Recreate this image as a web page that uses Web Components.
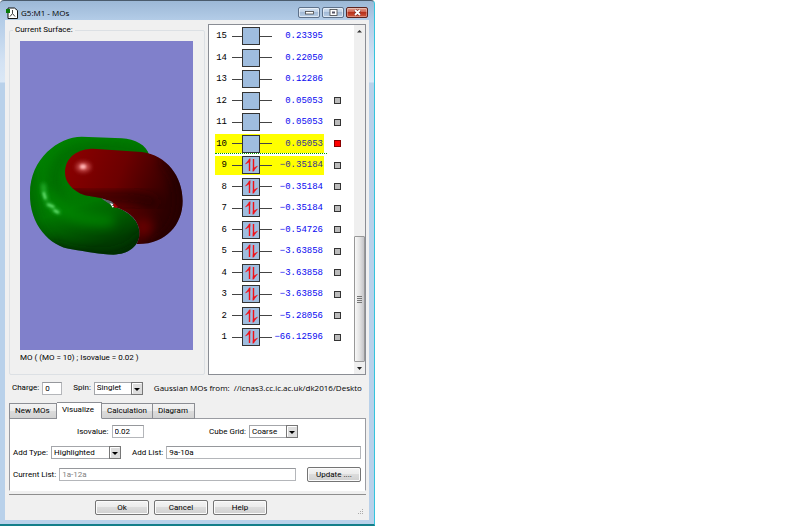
<!DOCTYPE html>
<html lang="en">
<head>
<meta charset="utf-8">
<title>G5:M1 - MOs</title>
<style>
  body { margin: 0; background: #fff; }
  :root {
    --ui: Roboto, "Liberation Sans", sans-serif;
    --title: "Open Sans", sans-serif;
    --mono: "Liberation Mono", monospace;
    font: 8px/12px var(--ui);
    color: #000;
  }
  .upper { display: grid; grid-template-columns: 196fr 158fr; gap: 3px; }
  .source { display: flex; align-items: center; gap: 11px; padding: 5px 3px 0; height: 16px; }
  .source span { font: 8px/12px var(--title); white-space: pre; }
  .actions { display: flex; justify-content: center; gap: 5px; border-top: 1px solid #8e8e8e; margin-top: 3px; padding: 5px 13px 0 0; }
  .form { display: grid; gap: 8px; }
  .line { display: flex; align-items: center; justify-content: space-between; gap: 11px; }
  .line.top { padding: 0 63px 0 64px; }
  .grow { flex: 1; }
</style>
</head>
<body>
<mo-window heading="G5:M1 - MOs">
  <div class="upper">
    <mo-group label="Current Surface:">
      <mo-surface></mo-surface>
      <span slot="caption">MO ( (MO = 10) ; Isovalue = 0.02 )</span>
    </mo-group>
    <mo-levels></mo-levels>
  </div>
  <div class="source">
    <mo-field label="Charge:" value="0" size="20"></mo-field>
    <mo-select label="Spin:" value="Singlet" size="49"></mo-select>
    <span>Gaussian MOs from:  //icnas3.cc.ic.ac.uk/dk2016/Deskto</span>
  </div>
  <mo-tabs>
    <div class="form">
      <div class="line top">
        <mo-field label="Isovalue:" value="0.02" size="32"></mo-field>
        <mo-select label="Cube Grid:" value="Coarse" size="49"></mo-select>
      </div>
      <div class="line">
        <mo-select label="Add Type:" value="Highlighted" size="70"></mo-select>
        <mo-field class="grow" label="Add List:" value="9a-10a"></mo-field>
      </div>
      <div class="line">
        <mo-field class="grow" label="Current List:" value="1a-12a" readonly></mo-field>
        <mo-button>Update ....</mo-button>
      </div>
    </div>
  </mo-tabs>
  <div class="actions">
    <mo-button>Ok</mo-button>
    <mo-button>Cancel</mo-button>
    <mo-button>Help</mo-button>
  </div>
</mo-window>

<script>
const define = (name, render) => customElements.define(name, class extends HTMLElement {
  connectedCallback() {
    if (this.shadowRoot) return;
    this.attachShadow({ mode: 'open' }).innerHTML = render(this);
  }
});

define('mo-window', el => `
<style>
  :host { display: block; box-sizing: border-box; width: 100%; max-width: 375px;
    border-radius: 4px 4px 0 0; border-bottom: 2px solid #147f8a; border-right: 1px solid #35c4dc; border-top: 1px solid #4a5b6c;
    padding: 0 5px 4px; background: linear-gradient(#9cb8d6, #b3cce7 19px, #d3e2f3 60px, #dbe8f6 81px, #b9d1ea 82px); }
  header { display: flex; align-items: center; height: 19px; gap: 3px; padding: 4px 1px 0; box-sizing: border-box; }
  h1 { flex: 1; margin: 0; font: 8px/14px var(--title); color: #000; }
  header > svg { width: 12px; height: 12px; display: block; }
  nav { display: flex; gap: 2px; }
  button { width: 22px; height: 11px; padding: 0; border: 1px solid #5d718a; border-radius: 2px; display: grid; place-items: center;
    background: linear-gradient(#d3e1f0, #bccfe5 50%, #a3bad6 50%, #b9cfe7); box-shadow: inset 0 0 0 1px #ffffff88; }
  button.close { background: linear-gradient(#e0a090, #cf5c48 50%, #b8321c 50%, #d0583c); border-color: #5c2420; box-shadow: inset 0 0 0 1px #ffffff55; }
  button svg { width: 9px; height: 7px; display: block; }
  main { background: #f0f0f0; padding: 4px 3px 5px 4px; display: block; position: relative; }
  .grip { position: absolute; right: 5px; bottom: 5px; width: 6px; height: 6px; }
</style>
<header>
  <svg viewBox="0 0 12 12"><path d="M2 1h6.500l3 2.500v8H2z" fill="#fff" stroke="#111"/><path d="M6.500 3v3.500M6.500 6.500L4 9.500M6.500 6.500L9 9.500" stroke="#444" fill="none"/><path d="M0 2h4v4H0z" fill="#087a08"/></svg>
  <h1>${el.getAttribute('heading')}</h1>
  <nav>
    <button aria-label="Minimize"><svg viewBox="0 0 9 7"><rect x=".5" y="2.500" width="8" height="2.500" fill="#fff" stroke="#444" stroke-width=".8"/></svg></button>
    <button aria-label="Maximize"><svg viewBox="0 0 9 7"><rect x="1" y=".5" width="7" height="6" fill="#fff" stroke="#444" stroke-width=".8"/><rect x="3" y="2.500" width="3" height="2" fill="#556"/></svg></button>
    <button class="close" aria-label="Close"><svg viewBox="0 0 9 7"><path d="M2 1l5 5M7 1L2 6" stroke="#622" stroke-width="2.800"/><path d="M2 1l5 5M7 1L2 6" stroke="#fff" stroke-width="1.800"/></svg></button>
  </nav>
</header>
<main><slot></slot>
  <svg class="grip" viewBox="0 0 6 6"><path d="M4 0h1v1H4zM4 2h1v1H4zM2 2h1v1H2zM4 4h1v1H4zM2 4h1v1H2zM0 4h1v1H0z" fill="#aaa"/></svg>
</main>`);

define('mo-group', el => `
<style>
  :host { display: block; }
  fieldset { margin: 0; min-width: 0; height: 100%; box-sizing: border-box; border: 1px solid #dce0e4; border-radius: 2px; padding: 5px 11px 0 10px; }
  legend { padding: 0 2px; margin-left: -7px; }
  ::slotted([slot=caption]) { display: block; padding-top: 2px; white-space: nowrap; }
</style>
<fieldset><legend>${el.getAttribute('label')}</legend><slot></slot><slot name="caption"></slot></fieldset>`);

define('mo-surface', () => `
<style>
  :host { display: block; background: #8080cb; }
  svg { display: block; width: 100%; }
</style>
<svg viewBox="0 0 519 927" role="img" aria-label="Molecular orbital surface">
  <defs>
    <linearGradient id="g" x1="0" y1="0" x2=".35" y2="1"><stop offset="0" stop-color="#008200"/><stop offset=".65" stop-color="#007800"/><stop offset="1" stop-color="#003c00"/></linearGradient>
    <linearGradient id="r" x1="0" y1="0" x2="1" y2=".35"><stop offset="0" stop-color="#8e0000"/><stop offset=".5" stop-color="#6c0000"/><stop offset=".95" stop-color="#2e0000"/></linearGradient>
    <filter id="b" x="-50%" y="-50%" width="200%" height="200%"><feGaussianBlur stdDeviation="16"/></filter>
    <filter id="s" x="-80%" y="-80%" width="260%" height="260%"><feGaussianBlur stdDeviation="7"/></filter>
    <filter id="t" x="-50%" y="-50%" width="200%" height="200%"><feGaussianBlur stdDeviation="3"/></filter>
    <path id="gp" d="M388 92C380 60 345 42 305 40L185 35C115 36 30 100 30 205C28 300 90 365 155 373C200 380 240 389 280 389C325 388 357 365 359 325C358 280 315 255 286 247L245 220C270 180 300 120 388 92Z"/>
    <path id="rp" d="M135 143C135 95 175 71 220 71L365 81C440 90 488 155 488 228C488 300 435 360 350 357C359 340 360 325 357 310C350 278 317 255 287 247L275 230L243 219L195 211C155 196 135 170 135 143Z"/>
    <clipPath id="gc"><use href="#gp"/></clipPath>
    <clipPath id="rc"><use href="#rp"/></clipPath>
  </defs>
  <g transform="translate(0 252)">
    <use href="#gp" fill="url(#g)"/>
    <g clip-path="url(#gc)">
      <path d="M400 95C300 60 190 60 145 85C100 115 90 180 125 225" fill="none" stroke="#004800" stroke-width="22" opacity=".45" filter="url(#b)"/>
      <path d="M90 365C150 400 320 430 380 330" fill="none" stroke="#001c00" stroke-width="30" opacity=".8" filter="url(#b)"/>
      <path d="M30 130C10 220 40 320 100 365" fill="none" stroke="#003800" stroke-width="14" opacity=".6" filter="url(#b)"/>
      <path d="M90 200C110 270 200 290 280 285" fill="none" stroke="#008400" stroke-width="30" filter="url(#b)"/>
      <path d="M70 180Q71 205 78 222M82 236L98 246M102 255L116 262" fill="none" stroke="#30c03c" stroke-width="10" stroke-linecap="round" filter="url(#s)"/>
      <path d="M71 204L76 220M84 239L100 245M104 257L114 262" fill="none" stroke="#6fe87a" stroke-width="6" stroke-linecap="round" filter="url(#t)"/>
    </g>
    <use href="#rp" fill="url(#r)"/>
    <g clip-path="url(#rc)">
      <path d="M150 205C210 235 300 195 410 235" fill="none" stroke="#1c0000" stroke-width="26" opacity=".85" filter="url(#b)"/>
      <path d="M430 100C520 170 500 330 400 365" fill="none" stroke="#200000" stroke-width="26" opacity=".85" filter="url(#b)"/>
      <ellipse cx="370" cy="307" rx="28" ry="26" fill="#6c0000" filter="url(#b)"/>
      <ellipse cx="190" cy="126" rx="22" ry="15" fill="#c85050" filter="url(#s)"/>
      <ellipse cx="189" cy="125" rx="9" ry="7" fill="#ffb0b0" filter="url(#t)"/>
    </g>
    <path d="M245 221L272 228L284 238L278 247L268 236Z" fill="#566"/>
    <path d="M270 234L280 238L275 242L283 244L278 248Z" fill="#fff"/>
    <path d="M282 234L294 246L284 249L279 240Z" fill="#a00000"/>
  </g>
</svg>`);

define('mo-levels', () => {
  const energies = ['0.23395', '0.22050', '0.12286', '0.05053', '0.05053', '0.05053', '−0.35184', '−0.35184', '−0.35184', '−0.54726', '−3.63858', '−3.63858', '−3.63858', '−5.28056', '−66.12596'];
  const rows = energies.map((e, i) => {
    const n = 15 - i;
    const spins = n < 10 ? '<path d="M7.500 15V3M11.500 3v12" fill="none" stroke="#f01018" stroke-width="1.400"/><path d="M8 2.500v3L3.500 8zM11 15.500v-3L15.500 10z" fill="#f01018" stroke="#f01018" stroke-width=".5"/>' : '';
    return `<li class="${n === 10 || n === 9 ? 'hot' : ''} n${n}"><div class="bar"><span class="num">${n}</span><i></i><svg viewBox="0 0 18 18"><rect x=".5" y=".5" width="17" height="17" fill="#9fbddf" stroke="#333"/>${spins}</svg><i class="r"></i><span class="e">${e}</span></div>${n < 13 ? '<b></b>' : ''}</li>`;
  }).join('');
  return `
<style>
  :host { display: flex; background: #fff; border: 1px solid #8a8d94; color: #000; }
  ol { flex: 1; list-style: none; margin: 0; padding: 0 0 26px 6px; font: 9px/18px var(--mono); }
  li { display: flex; align-items: center; height: 21px; position: relative; }
  li:nth-child(odd) { height: 22px; }
  .bar { display: grid; grid-template-columns: 12px 15px 18px 12px 1fr; align-items: center; height: 19px; width: 109px; }
  .hot .bar { background: #ff0; }
  .n9::before { content: ""; position: absolute; left: 0; top: -1px; width: 112px; border-top: 1px dotted #00a000; }
  .num { text-align: right; }
  i { height: 1px; background: #444; margin-left: 5px; }
  .r { margin-left: 0; }
  svg { width: 18px; height: 18px; display: block; }
  .e { color: #0808f0; justify-self: end; padding-right: 1px; white-space: nowrap; }
  .hot .e { color: #303098; }
  b { width: 7px; height: 7px; box-sizing: border-box; border: 1px solid #333; background: #bbb; margin-left: 10px; }
  .n10 b { background: #f00; border-color: #800; }
  .scroll { width: 11px; background: #efefef; display: flex; flex-direction: column; align-items: center; }
  .scroll svg { width: 11px; height: 12px; }
  .thumb { width: 11px; height: 126px; margin-top: auto; box-sizing: border-box; border: 1px solid #989898; border-radius: 1px; background: linear-gradient(90deg, #f8f8f8, #e4e4e4 50%, #c4c4c8); display: grid; place-items: center; }
  .scroll .thumb svg { width: 5px; height: 7px; }
</style>
<ol>${rows}</ol>
<div class="scroll" aria-hidden="true">
  <svg viewBox="0 0 11 12"><path d="M3 7.500L5.500 5 8 7.500z" fill="#333"/></svg>
  <div class="thumb"><svg viewBox="0 0 5 7"><path d="M0 .5h5M0 2.500h5M0 4.500h5M0 6.500h5" stroke="#777"/></svg></div>
  <svg viewBox="0 0 11 12"><path d="M3 5l2.500 3L8 5z" fill="#222"/></svg>
</div>`;
});

define('mo-field', el => {
  const size = el.getAttribute('size'), ro = el.hasAttribute('readonly');
  return `
<style>
  :host { display: block; }
  label { display: flex; align-items: center; gap: 3px; white-space: nowrap; }
  input { font: inherit; color: ${ro ? '#808080' : '#000'}; height: 13px; box-sizing: border-box; min-width: 0; padding: 0 2px; margin: 0; border: 1px solid #b4b6ba; border-top-color: #96989c; background: #fff; outline: 0; ${size ? `width: ${size}px` : 'flex: 1'}; }
</style>
<label>${el.getAttribute('label')}<input type="text" value="${el.getAttribute('value')}"${ro ? ' readonly' : ''}></label>`;
});

define('mo-select', el => `
<style>
  :host { display: block; }
  label { display: flex; align-items: center; gap: 3px; white-space: nowrap; }
  .box { display: block; position: relative; width: ${el.getAttribute('size')}px; height: 13px; }
  select { appearance: none; font: inherit; line-height: 10px; color: #000; width: 100%; height: 100%; display: block; box-sizing: border-box; border: 1px solid #a4a6aa; border-radius: 0; background: #fff; padding: 0 12px 0 2px; margin: 0; outline: 0; }
  svg { position: absolute; right: 0; top: 0; width: 12px; height: 13px; pointer-events: none; }
</style>
<label>${el.getAttribute('label')}<span class="box"><select><option>${el.getAttribute('value')}</option></select>
<svg viewBox="0 0 12 13"><rect x=".5" y=".5" width="11" height="12" fill="#ddd" stroke="#777"/><path d="M1.500 11.500v-10h9" fill="none" stroke="#fff"/><path d="M3 6h6L6 9z" fill="#000"/></svg></span></label>`);

define('mo-button', () => `
<style>
  :host { display: block; }
  button { font: inherit; color: #000; display: block; width: 54px; height: 15px; padding: 0; border: 1px solid #747474; border-radius: 2px; background: linear-gradient(#f4f4f4, #ebebeb 50%, #dcdcdc 50%, #d0d0d0); box-shadow: inset 0 0 0 1px #fbfbfb; }
</style>
<button><slot></slot></button>`);

define('mo-tabs', () => `
<style>
  :host { display: block; margin-top: 6px; }
  nav { display: flex; align-items: flex-end; height: 17px; margin-bottom: -1px; position: relative; }
  button { font: inherit; color: #000; height: 16px; padding: 0 4px 0 5px; min-width: 45px; text-align: left; border: 1px solid #8c8e94; border-left-width: 0; background: linear-gradient(#f3f3f3, #ebebeb 50%, #dcdcdc 50%, #d2d2d2); }
  button:first-child { border-left-width: 1px; min-width: 48px; }
  button:nth-child(3) { min-width: 51px; }
  button:last-child { min-width: 42px; }
  .on { height: 17px; background: #fff; border-bottom-color: #fff; padding-bottom: 2px; }
  section { border: 1px solid #9a9ca2; border-bottom-color: #fff; background: #fff; padding: 6px 4px 8px 3px; }
</style>
<nav role="tablist"><button role="tab">New MOs</button><button role="tab" class="on" aria-selected="true">Visualize</button><button role="tab">Calculation</button><button role="tab">Diagram</button></nav>
<section role="tabpanel"><slot></slot></section>`);
</script>
</body>
</html>
